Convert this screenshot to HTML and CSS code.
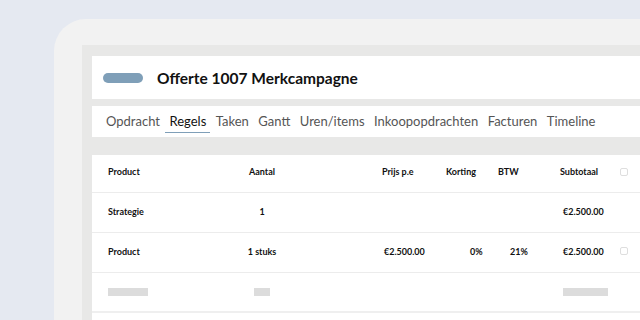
FILE: index.html
```html
<html>
<head>
    <title>Offerte 1007 Merkcampagne</title>
    <link rel="stylesheet" href="styles.css">
</head>
<body>
    <div class="device">
        <div class="screen">
            <!-- Page header -->
            <div class="card page-header">
                <div class="pill"></div>
                <h1>Offerte 1007 Merkcampagne</h1>
            </div>

            <!-- Tabs -->
            <nav class="card tabs">
                <span class="tab">Opdracht</span>
                <span class="tab active">Regels</span>
                <span class="tab">Taken</span>
                <span class="tab">Gantt</span>
                <span class="tab">Uren/items</span>
                <span class="tab">Inkoopopdrachten</span>
                <span class="tab">Facturen</span>
                <span class="tab">Timeline</span>
            </nav>

            <!-- Order lines -->
            <div class="card lines">
                <div class="row head">
                    <span>Product</span>
                    <span class="qty">Aantal</span>
                    <span>Prijs p.e</span>
                    <span>Korting</span>
                    <span>BTW</span>
                    <span>Subtotaal</span>
                    <span class="check"></span>
                </div>
                <div class="row">
                    <span>Strategie</span>
                    <span class="qty">1</span>
                    <span></span>
                    <span></span>
                    <span></span>
                    <span class="sub">€2.500.00</span>
                    <span></span>
                </div>
                <div class="row">
                    <span>Product</span>
                    <span class="qty">1 stuks</span>
                    <span class="price">€2.500.00</span>
                    <span class="disc">0%</span>
                    <span class="vat">21%</span>
                    <span class="sub">€2.500.00</span>
                    <span class="check"></span>
                </div>
                <div class="row skeleton">
                    <span><i class="bar" style="width: 40px"></i></span>
                    <span class="qty"><i class="bar" style="width: 16px"></i></span>
                    <span></span>
                    <span></span>
                    <span></span>
                    <span class="sub"><i class="bar" style="width: 45px"></i></span>
                    <span></span>
                </div>
                <div class="row empty"></div>
            </div>
        </div>
    </div>
</body>
</html>
```

FILE: styles.css
```css
body {
    margin: 0;
    padding: 19px 0 0 54px;
    height: 320px;
    box-sizing: border-box;
    overflow: hidden;
    background-color: #e5e9f1; /* light blue-grey backdrop */
    font-family: 'Lato', sans-serif;
    color: #111;
}

.device {
    background-color: #f2f2f2;
    border-top-left-radius: 32px;
    padding: 26px 0 0 28px;
    height: 100%;
    box-sizing: border-box;
}

.screen {
    background-color: #e8e8e7;
    padding: 11px 0 0 10px;
    height: 100%;
    box-sizing: border-box;
    overflow: hidden;
}

.card {
    background-color: #ffffff;
}

.page-header {
    display: flex;
    align-items: center;
    height: 43px;
    padding-left: 11px;
    margin-bottom: 7px;
}

.pill {
    width: 40px;
    height: 10px;
    border-radius: 5px;
    background-color: #7f9fb8;
    margin-right: 14px;
}

h1 {
    margin: 0;
    font-size: 15.5px;
    font-weight: 700;
    color: #111;
}

.tabs {
    display: flex;
    height: 31px;
    padding-left: 14px;
    gap: 9.5px;
    margin-bottom: 18px;
}

.tab {
    font-size: 13px;
    color: #555;
    line-height: 31px;
    height: 26px;
}

.tab.active {
    color: #111;
    border-bottom: 1px solid #7f9fb8;
    padding: 0 4px;
    margin: 0 -4px;
}

.lines {
    padding-left: 16px;
}

.row {
    display: grid;
    grid-template-columns: 139px 135px 64px 52px 62px 60px 8px;
    align-items: center;
    height: 40px;
    padding-bottom: 3px;
    box-sizing: border-box;
    border-bottom: 1px solid #ececec;
    font-size: 9px;
    font-weight: 700;
    margin-left: -16px;
    padding-left: 16px;
}

.row.head {
    height: 38px;
    padding-bottom: 4px;
}

.qty {
    width: 30px;
    text-align: center;
}

.price {
    padding-left: 2px;
}

.disc {
    padding-left: 24px;
}

.vat {
    padding-left: 12px;
}

.sub {
    padding-left: 3px;
}

.check {
    width: 8px;
    height: 8px;
    border: 1px solid #dedede;
    border-radius: 2px;
    box-sizing: border-box;
}

.skeleton {
    height: 40px;
    padding-bottom: 0;
    border-bottom: 2px solid #efefef;
}

.bar {
    display: block;
    height: 8px;
    background-color: #dcdcdc;
}

.qty .bar {
    margin: 0 auto;
}

.row.empty {
    border-bottom: none;
}
```
